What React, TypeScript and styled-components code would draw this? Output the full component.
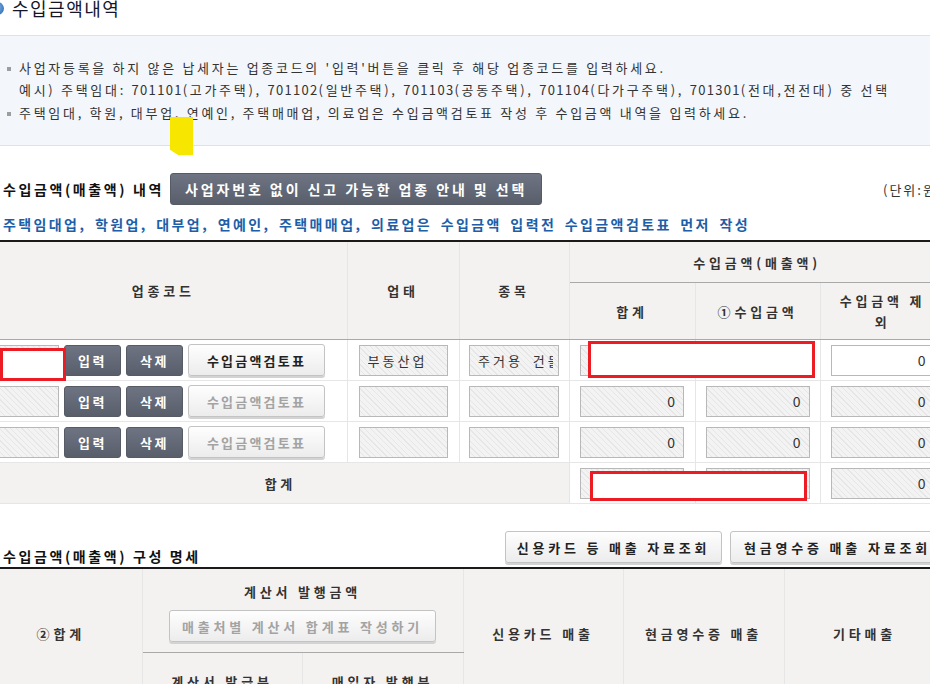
import styled, { createGlobalStyle } from "styled-components";

const GlobalStyle = createGlobalStyle`
  html, body {
    margin: 0;
    padding: 0;
    background: #fff;
    overflow: hidden;
  }
  body {
    font-family: "Noto Sans CJK KR", "Noto Sans", sans-serif;
    font-size: 13px;
    color: #333;
  }
`;

const Page = styled.div`
  position: relative;
  width: 965px;
  margin-left: -20px;
`;

const TitleRow = styled.h2`
  margin: 0;
  height: 35px;
  display: flex;
  align-items: flex-start;
  gap: 8px;
  padding-left: 11px;
  font-size: 18px;
  line-height: 17px;
  font-weight: normal;
  letter-spacing: 1.5px;
  color: #15152a;
`;

const TitleDot = styled.span`
  flex: none;
  width: 13px;
  height: 13px;
  margin-top: 2px;
  border-radius: 50%;
  background: radial-gradient(circle at 40% 40%, #8cbcef, #1d5cab);
`;

const InfoBox = styled.ul`
  margin: 0;
  list-style: none;
  padding: 21px 0 21px 39px;
  background: #f3f6fb;
  border-top: 1px solid #dbe2eb;
  border-bottom: 1px solid #dbe2eb;
`;

const InfoItem = styled.li`
  line-height: 22px;
  letter-spacing: 2.7px;
  color: #333;
  & + & {
    margin-top: 1px;
  }
  &::before {
    content: "";
    display: inline-block;
    width: 4px;
    height: 4px;
    margin: 0 8px 0 -12px;
    vertical-align: middle;
    background: #9d9d9d;
  }
`;

const Code = styled.span`
  letter-spacing: 1.3px;
`;

const SectionHead = styled.div<{ $bottom?: boolean }>`
  display: flex;
  align-items: ${(p) => (p.$bottom ? "flex-end" : "center")};
  height: 32px;
  padding-left: 23px;
  margin-top: 27px;
`;

const SectionTitle = styled.h3`
  margin: 0;
  font-size: 14px;
  line-height: 14px;
  font-weight: bold;
  letter-spacing: 2.6px;
  color: #111;
`;

const Unit = styled.span`
  margin-left: auto;
  width: 62px;
  letter-spacing: 2px;
  color: #333;
  white-space: nowrap;
`;

const DarkButton = styled.button<{ $large?: boolean }>`
  height: ${(p) => (p.$large ? "32px" : "31px")};
  width: ${(p) => (p.$large ? "auto" : "57px")};
  padding: ${(p) => (p.$large ? "0 14px" : "0")};
  margin-left: ${(p) => (p.$large ? "6px" : "0")};
  border: 1px solid #565b66;
  border-radius: 3px;
  background: linear-gradient(#6e7482, #585e6a);
  color: #fff;
  font-family: inherit;
  font-size: ${(p) => (p.$large ? "14px" : "13px")};
  font-weight: bold;
  letter-spacing: ${(p) => (p.$large ? "2.9px" : "2.5px")};
  white-space: nowrap;
`;

const LightButton = styled.button<{ $w: number; $ls?: number }>`
  width: ${(p) => p.$w}px;
  height: 32px;
  padding: 0;
  border: 1px solid #c3c3c3;
  border-radius: 3px;
  background: linear-gradient(#fefefe, #ececec);
  box-shadow: 0 2px 0 #d3d3d3;
  color: #222;
  font-family: inherit;
  font-size: 13px;
  font-weight: bold;
  letter-spacing: ${(p) => p.$ls ?? 2.2}px;
  white-space: nowrap;
  overflow: hidden;
  &:disabled {
    color: #a3a3a3;
  }
`;

const Notice = styled.p`
  margin: 9px 0 0;
  padding-left: 23px;
  line-height: 20px;
  font-size: 14px;
  font-weight: bold;
  letter-spacing: 2.4px;
  word-spacing: 3px;
  color: #1d5ea8;
  white-space: nowrap;
`;

const Table = styled.table<{ $gap: number }>`
  width: 965px;
  margin-top: ${(p) => p.$gap}px;
  table-layout: fixed;
  border-collapse: collapse;
  border-top: 2px solid #1a1a1a;
`;

const Th = styled.th<{ $h?: number; $lift?: number }>`
  height: ${(p) => (p.$h ? `${p.$h}px` : "auto")};
  padding: 0 0 ${(p) => p.$lift ?? 0}px;
  background: #f3f2f0;
  border-left: 1px solid #e6e6e6;
  border-right: 1px solid #e6e6e6;
  border-bottom: 1px solid #a9a9a9;
  font-size: 13px;
  line-height: 21px;
  font-weight: bold;
  letter-spacing: 3.8px;
  color: #333;
  vertical-align: middle;
  &:first-child {
    border-left: none;
  }
`;

const Td = styled.td<{ $label?: boolean }>`
  height: 40px;
  padding: 0 0 0 ${(p) => (p.$label ? "12px" : "0")};
  text-align: center;
  background: ${(p) => (p.$label ? "#f3f2f0" : "#fff")};
  border: 1px solid #e6e6e6;
  font-weight: ${(p) => (p.$label ? "bold" : "normal")};
  letter-spacing: 3.5px;
  &:first-child {
    border-left: none;
  }
`;

const CodeCell = styled.div`
  display: flex;
  align-items: center;
  gap: 5px;
  padding-left: 8px;
`;

const Field = styled.input<{ $w: number; $open?: boolean; $num?: boolean }>`
  box-sizing: border-box;
  width: ${(p) => p.$w}px;
  height: 31px;
  margin: 0;
  padding: ${(p) => (p.$num ? "0 8px 0 4px" : "0 5px 0 8px")};
  border: 1px solid #b8b8b8;
  background: ${(p) =>
    p.$open
      ? "#fff"
      : "repeating-linear-gradient(45deg, #f3f3f3 0 3px, #e6e6e6 3px 4px)"};
  font-family: inherit;
  font-size: ${(p) => (p.$num ? "14px" : "13px")};
  letter-spacing: ${(p) => (p.$num ? "0" : "3px")};
  word-spacing: 4px;
  text-align: ${(p) => (p.$num ? "right" : "left")};
  color: #333;
  vertical-align: middle;
  outline: none;
`;

const GroupHead = styled.div`
  display: flex;
  flex-direction: column;
  align-items: center;
  gap: 8px;
  padding-top: 2px;
`;

const Mask = styled.div<{ $x: number; $y: number; $w: number; $h: number }>`
  position: absolute;
  left: ${(p) => p.$x}px;
  top: ${(p) => p.$y}px;
  width: ${(p) => p.$w}px;
  height: ${(p) => p.$h}px;
  box-sizing: border-box;
  border: 3px solid #ed1c24;
  background: #fff;
`;

const Highlight = styled.div`
  position: absolute;
  left: 190px;
  top: 117px;
  width: 23px;
  height: 38px;
  background: #f7e600;
  clip-path: polygon(0 0, 100% 0, 100% 100%, 35% 100%, 0 86%);
`;

const rows = [
  { type: "부동산업", item: "주거용 건물", active: true },
  { type: "", item: "", active: false },
  { type: "", item: "", active: false },
];

export default function App() {
  return (
    <Page>
      <GlobalStyle />
      <TitleRow>
        <TitleDot />
        수입금액내역
      </TitleRow>

      <InfoBox>
        <InfoItem>
          사업자등록을 하지 않은 납세자는 업종코드의 '입력'버튼을 클릭 후 해당 업종코드를 입력하세요.
          <br />
          예시) 주택임대: <Code>701101</Code>(고가주택), <Code>701102</Code>(일반주택),{" "}
          <Code>701103</Code>(공동주택), <Code>701104</Code>(다가구주택), <Code>701301</Code>
          (전대,전전대) 중 선택
        </InfoItem>
        <InfoItem>
          주택임대, 학원, 대부업, 연예인, 주택매매업, 의료업은 수입금액검토표 작성 후 수입금액 내역을 입력하세요.
        </InfoItem>
      </InfoBox>

      <SectionHead>
        <SectionTitle>수입금액(매출액) 내역</SectionTitle>
        <DarkButton $large>사업자번호 없이 신고 가능한 업종 안내 및 선택</DarkButton>
        <Unit>(단위:원)</Unit>
      </SectionHead>

      <Notice>
        주택임대업, 학원업, 대부업, 연예인, 주택매매업, 의료업은 수입금액 입력전 수입금액검토표 먼저 작성
      </Notice>

      <Table $gap={6}>
        <colgroup>
          <col style={{ width: 367 }} />
          <col style={{ width: 112 }} />
          <col style={{ width: 110 }} />
          <col style={{ width: 126 }} />
          <col style={{ width: 125 }} />
          <col style={{ width: 125 }} />
        </colgroup>
        <thead>
          <tr>
            <Th rowSpan={2}>업종코드</Th>
            <Th rowSpan={2}>업태</Th>
            <Th rowSpan={2}>종목</Th>
            <Th colSpan={3} $h={40}>
              수입금액(매출액)
            </Th>
          </tr>
          <tr>
            <Th $h={56}>합계</Th>
            <Th $h={56}>①수입금액</Th>
            <Th $h={56}>
              수입금액 제<br />외
            </Th>
          </tr>
        </thead>
        <tbody>
          {rows.map((r, i) => (
            <tr key={i}>
              <Td>
                <CodeCell>
                  <Field $w={71} readOnly value="" />
                  <DarkButton>입력</DarkButton>
                  <DarkButton>삭제</DarkButton>
                  <LightButton $w={137} disabled={!r.active}>
                    수입금액검토표
                  </LightButton>
                </CodeCell>
              </Td>
              <Td>
                <Field $w={89} readOnly value={r.type} />
              </Td>
              <Td>
                <Field $w={90} readOnly value={r.item} />
              </Td>
              <Td>
                <Field $w={104} $num readOnly value="0" />
              </Td>
              <Td>
                <Field $w={104} $num readOnly value="0" />
              </Td>
              <Td>
                <Field $w={104} $num $open={r.active} readOnly value="0" />
              </Td>
            </tr>
          ))}
          <tr>
            <Td colSpan={3} $label>
              합계
            </Td>
            <Td>
              <Field $w={104} $num readOnly value="0" />
            </Td>
            <Td>
              <Field $w={104} $num readOnly value="0" />
            </Td>
            <Td>
              <Field $w={104} $num readOnly value="0" />
            </Td>
          </tr>
        </tbody>
      </Table>

      <SectionHead $bottom>
        <SectionTitle>수입금액(매출액) 구성 명세</SectionTitle>
        <LightButton $w={217} $ls={3.8} style={{ marginLeft: "auto" }}>
          신용카드 등 매출 자료조회
        </LightButton>
        <LightButton $w={215} $ls={3.8} style={{ marginLeft: 8 }}>
          현금영수증 매출 자료조회
        </LightButton>
      </SectionHead>

      <Table $gap={4}>
        <colgroup>
          <col style={{ width: 162 }} />
          <col style={{ width: 160 }} />
          <col style={{ width: 161 }} />
          <col style={{ width: 160 }} />
          <col style={{ width: 161 }} />
          <col style={{ width: 161 }} />
        </colgroup>
        <thead>
          <tr>
            <Th rowSpan={2} $lift={12}>
              ②합계
            </Th>
            <Th colSpan={2} $h={83}>
              <GroupHead>
                계산서 발행금액
                <LightButton $w={267} $ls={3.8} disabled>
                  매출처별 계산서 합계표 작성하기
                </LightButton>
              </GroupHead>
            </Th>
            <Th rowSpan={2} $lift={12}>
              신용카드 매출
            </Th>
            <Th rowSpan={2} $lift={12}>
              현금영수증 매출
            </Th>
            <Th rowSpan={2} $lift={12}>
              기타매출
            </Th>
          </tr>
          <tr>
            <Th $h={56}>계산서 발급분</Th>
            <Th $h={56}>매입자 발행분</Th>
          </tr>
        </thead>
      </Table>

      <Highlight />
      <Mask $x={20} $y={348} $w={66} $h={33} />
      <Mask $x={608} $y={341} $w={227} $h={37} />
      <Mask $x={610} $y={471} $w={217} $h={30} />
    </Page>
  );
}
